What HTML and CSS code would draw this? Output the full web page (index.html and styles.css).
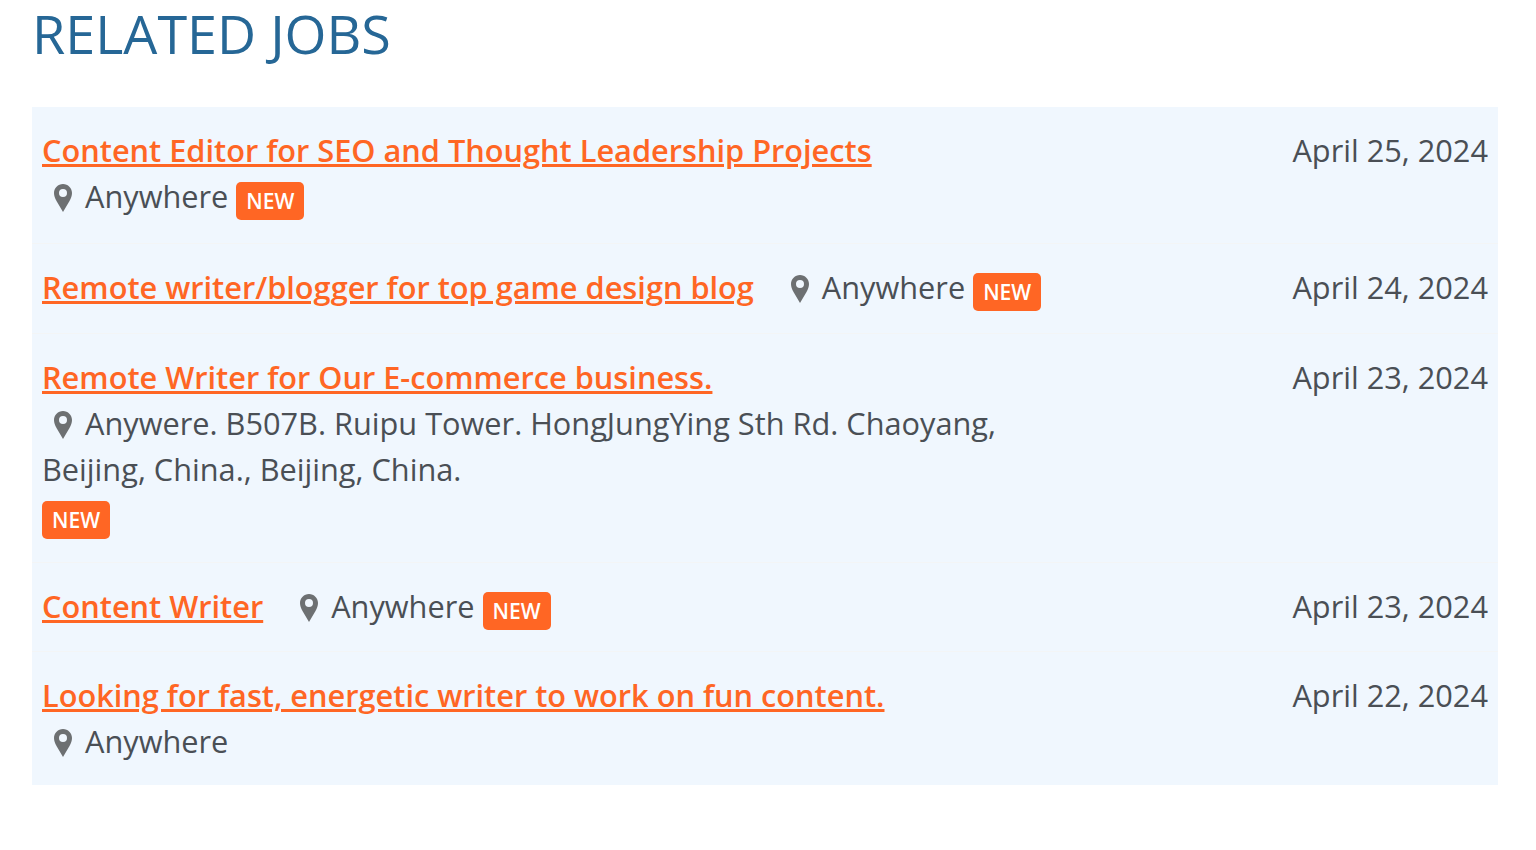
FILE: index.html
```html
<!DOCTYPE html>
<html lang="en">
<head>
    <meta charset="UTF-8">
    <title>Related Jobs</title>
    <link rel="stylesheet" href="styles.css">
</head>
<body>
    <h2 class="section-title">RELATED JOBS</h2>
    <ul class="job-list">
        <li class="job-row stacked">
            <div class="job-info">
                <a class="job-link" href="#">Content Editor for SEO and Thought Leadership Projects</a>
                <div class="job-place">
                    <svg class="pin" viewBox="0 0 18 28"><path fill-rule="evenodd" d="M9 0C4 0 0 4 0 9c0 3 1 5 2.500 8L9 28l6.500-11c1.500-3 2.500-5 2.500-8 0-5-4-9-9-9zm0 5a4 4 0 1 1 0 8 4 4 0 0 1 0-8z"/></svg>
                    Anywhere <span class="badge">NEW</span>
                </div>
            </div>
            <div class="job-date">April 25, 2024</div>
        </li>
        <li class="job-row">
            <div class="job-info">
                <a class="job-link" href="#">Remote writer/blogger for top game design blog</a>
                <span class="job-place inline">
                    <svg class="pin" viewBox="0 0 18 28"><path fill-rule="evenodd" d="M9 0C4 0 0 4 0 9c0 3 1 5 2.500 8L9 28l6.500-11c1.500-3 2.500-5 2.500-8 0-5-4-9-9-9zm0 5a4 4 0 1 1 0 8 4 4 0 0 1 0-8z"/></svg>
                    Anywhere <span class="badge">NEW</span>
                </span>
            </div>
            <div class="job-date">April 24, 2024</div>
        </li>
        <li class="job-row stacked">
            <div class="job-info">
                <a class="job-link" href="#">Remote Writer for Our E-commerce business.</a>
                <div class="job-place">
                    <svg class="pin" viewBox="0 0 18 28"><path fill-rule="evenodd" d="M9 0C4 0 0 4 0 9c0 3 1 5 2.500 8L9 28l6.500-11c1.500-3 2.500-5 2.500-8 0-5-4-9-9-9zm0 5a4 4 0 1 1 0 8 4 4 0 0 1 0-8z"/></svg>
                    Anywere. B507B. Ruipu Tower. HongJungYing Sth Rd. Chaoyang, Beijing, China., Beijing, China.
                </div>
                <div><span class="badge">NEW</span></div>
            </div>
            <div class="job-date">April 23, 2024</div>
        </li>
        <li class="job-row">
            <div class="job-info">
                <a class="job-link" href="#">Content Writer</a>
                <span class="job-place inline">
                    <svg class="pin" viewBox="0 0 18 28"><path fill-rule="evenodd" d="M9 0C4 0 0 4 0 9c0 3 1 5 2.500 8L9 28l6.500-11c1.500-3 2.500-5 2.500-8 0-5-4-9-9-9zm0 5a4 4 0 1 1 0 8 4 4 0 0 1 0-8z"/></svg>
                    Anywhere <span class="badge">NEW</span>
                </span>
            </div>
            <div class="job-date">April 23, 2024</div>
        </li>
        <li class="job-row stacked">
            <div class="job-info">
                <a class="job-link" href="#">Looking for fast, energetic writer to work on fun content.</a>
                <div class="job-place">
                    <svg class="pin" viewBox="0 0 18 28"><path fill-rule="evenodd" d="M9 0C4 0 0 4 0 9c0 3 1 5 2.500 8L9 28l6.500-11c1.500-3 2.500-5 2.500-8 0-5-4-9-9-9zm0 5a4 4 0 1 1 0 8 4 4 0 0 1 0-8z"/></svg>
                    Anywhere
                </div>
            </div>
            <div class="job-date">April 22, 2024</div>
        </li>
    </ul>
</body>
</html>
```

FILE: styles.css
```css
* {
    margin: 0;
    padding: 0;
    box-sizing: border-box;
}

body {
    background: #ffffff;
    font-family: 'Open Sans', sans-serif;
    font-size: 30.72px;
    line-height: 46.08px;
    color: #4a4f55;
    padding: 0 38px 0 32px;
}

.section-title {
    color: #266796;
    font-size: 53.9px;
    font-weight: 400;
    line-height: 66px;
    margin-bottom: 41px;
}

.job-list {
    list-style: none;
    background: #f0f7fe;
}

.job-row {
    display: flex;
    justify-content: space-between;
    padding: 20px 10px 21.75px;
    border-bottom: 1px solid #f3f5f6;
}

.job-row.stacked {
    padding-bottom: 22.75px;
}

.job-row:last-child {
    border-bottom: none;
    padding-bottom: 21px;
}

.job-info {
    width: 1000px;
}

.job-link {
    color: #ff6624;
    font-weight: 600;
}

.job-place {
    display: block;
}

.job-place.inline {
    display: inline;
    margin-left: 17px;
}

.pin {
    width: 18px;
    height: 28px;
    fill: #6d7072;
    margin: 0 5px 0 12px;
    vertical-align: -4px;
}

.badge {
    display: inline-block;
    background: #ff6624;
    color: #ffffff;
    font-size: 21px;
    font-weight: 600;
    line-height: 38px;
    padding: 0 10px;
    border-radius: 5px;
    vertical-align: -1px;
}

.job-date {
    white-space: nowrap;
}
```
